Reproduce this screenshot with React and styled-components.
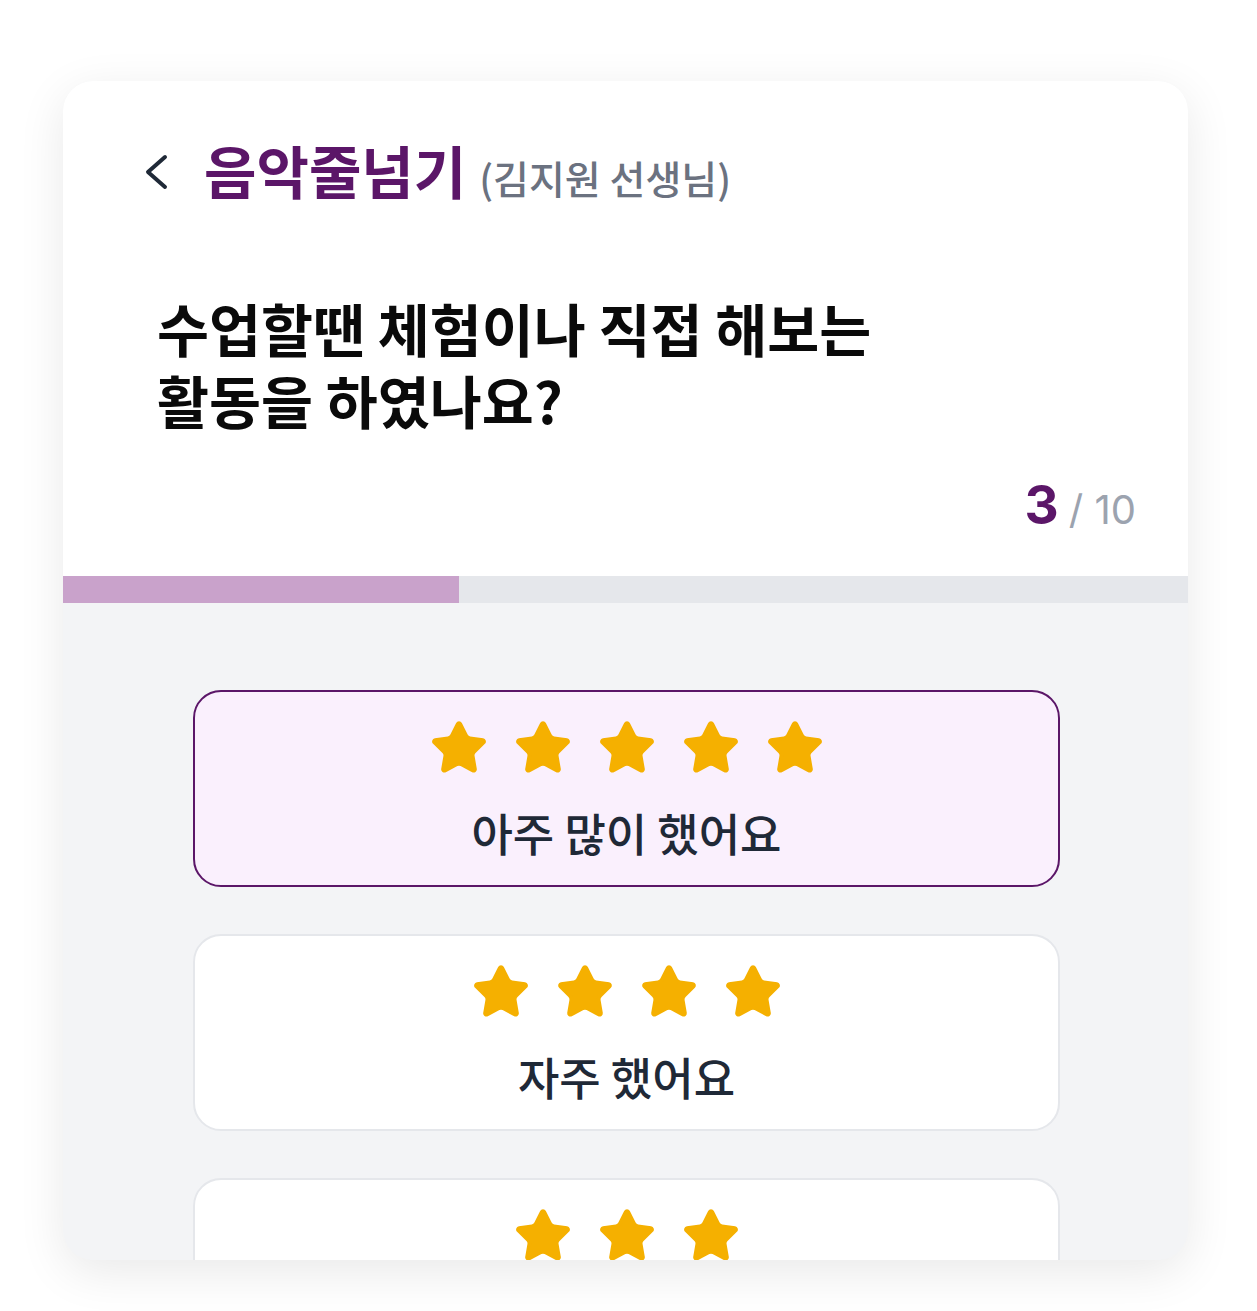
import React from 'react';
import styled, { createGlobalStyle } from 'styled-components';
import { Star } from 'lucide-react';

const GlobalStyle = createGlobalStyle`
  html, body {
    margin: 0;
    padding: 0;
    background: #ffffff;
  }
  body {
    font-family: Inter, "Noto Sans CJK KR", sans-serif;
  }
`;

const Page = styled.div`
  padding: 81px 69px 0 63px;
  height: 1311px;
  box-sizing: border-box;
`;

const Card = styled.div`
  height: 1179px;
  border-radius: 30px;
  background: #f3f4f6;
  overflow: hidden;
  box-shadow: 0 12px 48px rgba(0, 0, 0, 0.09);
`;

const Header = styled.div`
  background: #ffffff;
  padding: 54px 52px 28px 94px;
`;

const TitleRow = styled.div`
  display: flex;
  align-items: center;
  margin-left: -13px;
  gap: 36px;
`;

const BackButton = styled.button`
  border: none;
  background: none;
  padding: 0;
  display: flex;
  cursor: pointer;
  margin-top: 6px;
`;

const TitleText = styled.div`
  display: flex;
  align-items: baseline;
  gap: 13px;
  line-height: 1.2;
`;

const Title = styled.span`
  font-family: "Noto Sans CJK KR", sans-serif;
  font-size: 57px;
  font-weight: 700;
  color: #5b1668;
`;

const Teacher = styled.span`
  font-family: "Noto Sans CJK KR", sans-serif;
  font-size: 39px;
  font-weight: 500;
  color: #6b7280;
`;

const Question = styled.h1`
  margin: 88px 0 0;
  font-family: "Noto Sans CJK KR", sans-serif;
  font-size: 56.5px;
  font-weight: 700;
  line-height: 72px;
  color: #0a0a0a;
`;

const Counter = styled.div`
  margin-top: 40px;
  text-align: right;
  line-height: 60px;
  font-family: Inter, sans-serif;
`;

const Current = styled.span`
  font-size: 53px;
  font-weight: 700;
  color: #5b1668;
`;

const Total = styled.span`
  font-size: 40px;
  font-weight: 400;
  color: #9ca3af;
  margin-left: 10px;
`;

const Track = styled.div`
  height: 27px;
  background: #e5e7eb;
`;

const Fill = styled.div`
  height: 100%;
  background: #c9a2cb;
`;

const Body = styled.div`
  padding: 87px 128px 0 130px;
  display: flex;
  flex-direction: column;
  gap: 47px;
`;

const Option = styled.button`
  box-sizing: border-box;
  width: 100%;
  border-radius: 28px;
  border: 2px solid ${p => (p.$selected ? '#5b1668' : '#e5e7eb')};
  background: ${p => (p.$selected ? '#faf0fd' : '#ffffff')};
  padding: 26px 0 22px;
  display: flex;
  flex-direction: column;
  align-items: center;
  gap: 25px;
  cursor: pointer;
  flex-shrink: 0;
`;

const Stars = styled.div`
  display: flex;
  gap: 24px;
`;

const Label = styled.span`
  font-family: "Noto Sans CJK KR", sans-serif;
  font-size: 45px;
  font-weight: 500;
  line-height: 60px;
  color: #1f2937;
`;

const options = [
  { stars: 5, label: '아주 많이 했어요', selected: true },
  { stars: 4, label: '자주 했어요' },
  { stars: 3, label: '가끔 했어요' },
  { stars: 2, label: '별로 안 했어요' },
  { stars: 1, label: '전혀 안 했어요' },
];

const current = 3;
const total = 10;

export default function App() {
  return (
    <>
      <GlobalStyle />
      <Page>
        <Card>
          <Header>
            <TitleRow>
              <BackButton aria-label="뒤로">
                <svg width="24" height="36" viewBox="0 0 24 36">
                  <polyline
                    points="21,3 4,18 21,33"
                    fill="none"
                    stroke="#1f2937"
                    strokeWidth="4"
                    strokeLinecap="round"
                    strokeLinejoin="round"
                  />
                </svg>
              </BackButton>
              <TitleText>
                <Title>음악줄넘기</Title>
                <Teacher>(김지원 선생님)</Teacher>
              </TitleText>
            </TitleRow>
            <Question>
              수업할땐 체험이나 직접 해보는
              <br />
              활동을 하였나요?
            </Question>
            <Counter>
              <Current>{current}</Current>
              <Total>/ {total}</Total>
            </Counter>
          </Header>
          <Track>
            <Fill style={{ width: '35.2%' }} />
          </Track>
          <Body>
            {options.map(o => (
              <Option key={o.label} $selected={o.selected}>
                <Stars>
                  {Array.from({ length: o.stars }).map((_, i) => (
                    <Star key={i} size={60} fill="#f5b000" color="#f5b000" strokeWidth={1.5} />
                  ))}
                </Stars>
                <Label>{o.label}</Label>
              </Option>
            ))}
          </Body>
        </Card>
      </Page>
    </>
  );
}
